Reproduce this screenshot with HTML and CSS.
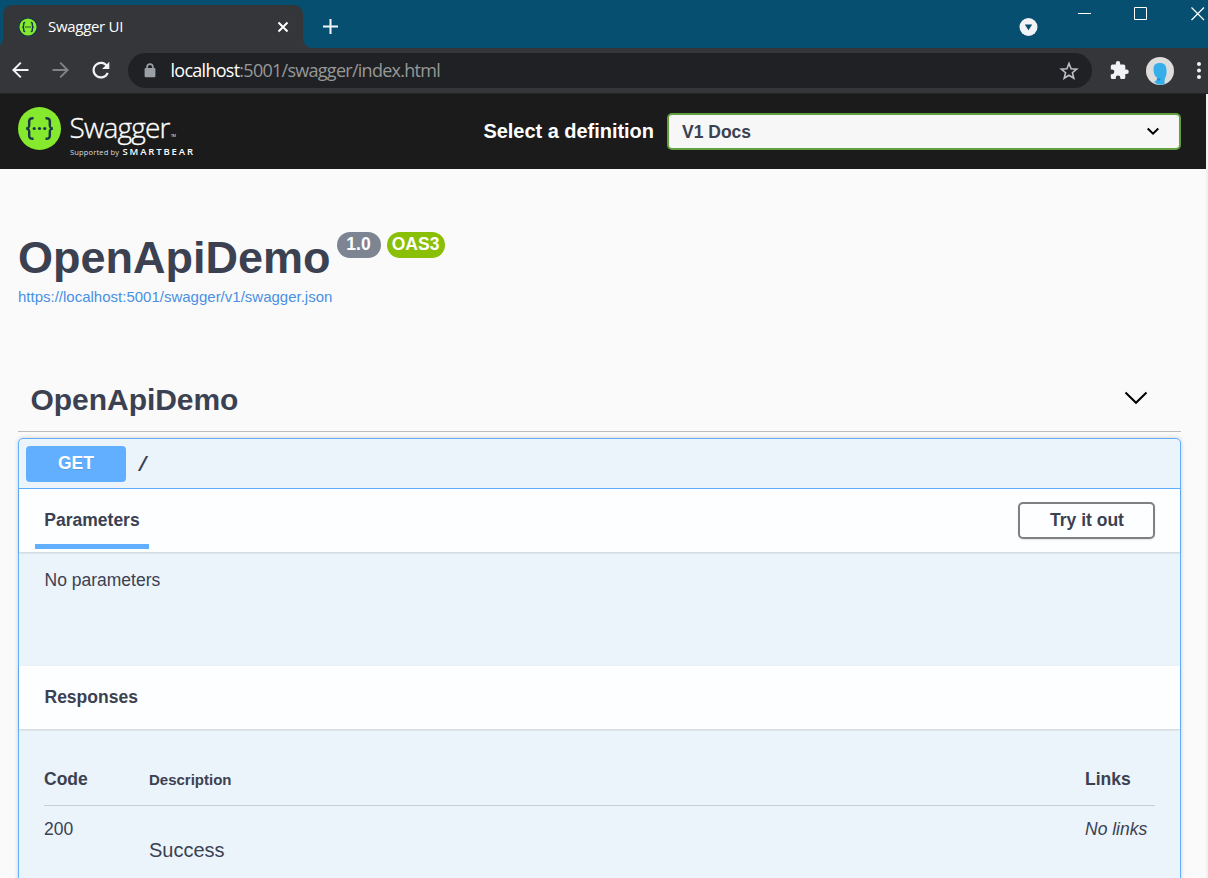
FILE: index.html
```html
<!DOCTYPE html>
<html lang="en">
<head>
<meta charset="utf-8">
<title>Swagger UI</title>
<link rel="stylesheet" href="styles.css">
</head>
<body>
<header class="tabstrip">
  <div class="tab">
    <svg class="favicon" width="20" height="20" viewBox="0 0 20 20"><circle cx="10" cy="10" r="9.2" fill="#85ea2d" stroke="#173647" stroke-width="1.2"/><path d="M7.2 5.5C5.6 5.4 5.6 6.2 5.7 8c0 1.2-.3 1.8-1.2 2 .9.2 1.2.8 1.2 2-.1 1.800 0 2.600 1.500 2.500M12.800 5.500c1.600-.1 1.600.700 1.500 2.500 0 1.200.3 1.800 1.200 2-.9.2-1.200.8-1.200 2 .1 1.800.1 2.600-1.500 2.500" fill="none" stroke="#173647" stroke-width="1.400"/><path d="M7.300 10h1.200m.9 0h1.200m.9 0h1.200" stroke="#173647" stroke-width="1.300"/></svg>
    <span class="tab-title">Swagger UI</span>
    <svg class="tab-close" width="12" height="12" viewBox="0 0 12 12"><path d="M1.500 1.500l9 9m0-9l-9 9" stroke="#fff" stroke-width="2"/></svg>
  </div>
  <svg class="newtab" width="16" height="16" viewBox="0 0 16 16"><path d="M7.500 0v15M0 7.500h15" stroke="#f4f7f8" stroke-width="2"/></svg>
  <div class="window-controls">
    <svg width="228" height="48" viewBox="0 0 228 48" fill="none"><circle cx="48.500" cy="27" r="9" fill="#f1f3f4"/><path d="M44.800 24.500h7.400L48.500 30.300z" fill="#074f70"/><path d="M98 13.500h13M154.500 7.500h12v12h-12z" stroke="#fff"/><path d="M211.500 7.500l12.500 12.500m0-12.500l-12.500 12.500" stroke="#fff" stroke-width="1.200"/></svg>
  </div>
</header>
<nav class="toolbar">
  <svg class="nav-icons" width="128" height="46" viewBox="0 0 128 46" fill="none"><path d="M28.500 22H13.500M20.800 14.600L13.400 22l7.400 7.400" stroke="#f1f3f4" stroke-width="2"/><path d="M52.500 22h15M60.200 14.600l7.400 7.400-7.400 7.400" stroke="#828386" stroke-width="2"/><path d="M107.300 18.600A7.300 7.300 0 1 0 107.700 24.800" stroke="#f1f3f4" stroke-width="2.200"/><path d="M109.300 13.800v7.200h-7.200z" fill="#f1f3f4"/></svg>
  <div class="omnibox">
    <svg width="12" height="15" viewBox="0 0 12 15"><path d="M3.100 6V4a2.900 2.900 0 0 1 5.800 0v2" fill="none" stroke="#9aa0a6" stroke-width="1.600"/><rect x=".6" y="5" width="10.800" height="9.200" rx="1.200" fill="#9aa0a6"/></svg>
    <span class="address"><b>localhost</b>:5001/swagger/index.html</span>
    <svg class="star" width="20" height="20" viewBox="0 0 20 20"><path d="M10 2.500l2.100 5.200 5.600.4-4.300 3.600 1.400 5.500-4.800-3-4.800 3 1.400-5.500L2.300 8.100l5.600-.4z" fill="none" stroke="#bdc1c6" stroke-width="1.600"/></svg>
  </div>
  <svg class="tools" width="116" height="46" viewBox="0 0 116 46"><path transform="translate(-.6 0)" d="M35.200 21.600h-1.300v-3.300a1.700 1.700 0 0 0-1.700-1.700h-3.400v-1.300a2.200 2.200 0 0 0-4.400 0v1.300h-3.300a1.700 1.700 0 0 0-1.700 1.700v3.200h1.200a2.350 2.350 0 0 1 0 4.700h-1.200v3.200a1.700 1.700 0 0 0 1.700 1.700h3.200v-1.200a2.350 2.350 0 0 1 4.700 0v1.200h3.200a1.700 1.700 0 0 0 1.700-1.700V26h1.300a2.200 2.200 0 0 0 0-4.400z" fill="#f1f3f4"/><circle cx="68" cy="23" r="14" fill="#dedddc"/><path d="M68 15c-4.500 0-6.500 2-6.500 6 0 4.500 1.200 7 3.500 8.800 0 2-1 3.200-3 4.200q3 2.600 6.500 2.800 2.500 0 4.200-.8c-.3-3-.1-5 .6-6.500 1.200-2 1.400-4.500 1.200-8-.3-4.500-2.500-6.500-6.500-6.500z" fill="#35aeea"/><path d="M65 31l4-1-2 3z" fill="#168dca"/><g fill="#f1f3f4"><circle cx="107" cy="16" r="2"/><circle cx="107" cy="22.500" r="2"/><circle cx="107" cy="29" r="2"/></g></svg>
</nav>
<div class="viewport">
<main class="page">
  <div class="topbar">
    <svg class="logo" width="190" height="75" viewBox="0 0 190 75"><circle cx="21.500" cy="34.500" r="21.500" fill="#85ea2d"/><g transform="translate(-.5 -.5)"><g fill="none" stroke="#173647" stroke-width="2.500"><path d="M16 24.800c-4.200-.4-4.600 1.500-4.300 5.500.2 3.200-.3 4.500-3 4.700 2.700.2 3.200 1.500 3 4.700-.3 4 .1 5.900 4.300 5.500M28 24.800c4.200-.4 4.600 1.500 4.300 5.500-.2 3.200.3 4.500 3 4.700-2.700.2-3.200 1.500-3 4.700.3 4-.1 5.900-4.300 5.500"/></g><g fill="#173647"><circle cx="16.700" cy="35" r="1.600"/><circle cx="22" cy="35" r="1.600"/><circle cx="27.300" cy="35" r="1.600"/></g></g><g fill="#fff"><text class="logo-name" x="51.500" y="43.500" textLength="101">Swagger</text><text class="logo-tm" x="153" y="43" textLength="5">TM</text><text class="logo-by" x="52" y="61" textLength="49">Supported by</text><text class="logo-brand" x="104.500" y="61" textLength="70.500">SMARTBEAR</text></g></svg>
    <span class="select-label">Select a definition</span>
    <div class="select"><span>V1 Docs</span><svg width="14" height="9" viewBox="0 0 14 9"><path d="M1.700 1.500L7 6.700l5.300-5.200" fill="none" stroke="#000" stroke-width="2"/></svg></div>
  </div>
  <section class="info">
    <h1>OpenApiDemo</h1>
    <div class="badges"><span class="badge version">1.0</span><span class="badge oas">OAS3</span></div>
    <a class="spec-link">https://localhost:5001/swagger/v1/swagger.json</a>
  </section>
  <h2 class="tag"><span>OpenApiDemo</span><svg width="24" height="14" viewBox="0 0 24 14"><path d="M1.500 1.500L12 11.800 22.500 1.500" fill="none" stroke="#000" stroke-width="2"/></svg></h2>
  <article class="operation">
    <div class="summary"><span class="method">GET</span><span class="path">/</span></div>
    <div class="section-head"><span class="param-tab">Parameters</span><button class="try">Try it out</button></div>
    <div class="no-params">No parameters</div>
    <div class="section-head responses-head"><span>Responses</span></div>
    <div class="responses">
      <div class="row row-head"><b>Code</b><b class="desc-head">Description</b><b>Links</b></div>
      <div class="row row-body"><span>200</span><span class="success">Success</span><i>No links</i></div>
    </div>
  </article>
</main>
<div class="scrollbar"></div>
</div>
</body>
</html>
```

FILE: styles.css
```css
* { box-sizing: border-box; }
html, body { height: 100%; }
body { margin: 0; overflow: hidden; display: flex; flex-direction: column; background: #fafafa; color: #3b4151; font-family: "Liberation Sans", Arial, sans-serif; font-size: 17.5px; }
svg { display: block; flex: none; }

.tabstrip { flex: none; height: 48px; background: #074f70; display: flex; padding: 5px 0 0 3px; }
.tab { position: relative; width: 300px; height: 43px; background: #35363a; border-radius: 9px 9px 0 0; display: flex; align-items: center; padding: 0 14px 0 15px; color: #fff; }
.tab::before, .tab::after { content: ""; position: absolute; bottom: 0; width: 9px; height: 9px; }
.tab::before { left: -9px; background: radial-gradient(circle at 0 0, transparent 8.5px, #35363a 9px); }
.tab::after { right: -9px; background: radial-gradient(circle at 100% 0, transparent 8.5px, #35363a 9px); }
.tab-title { margin: -2px 0 0 10px; font: 15px/20px "Open Sans", sans-serif; letter-spacing: -.3px; }
.tab-close { margin-left: auto; }
.newtab { margin: 14px 0 0 20px; }
.window-controls { margin: -5px 0 0 auto; }

.toolbar { flex: none; height: 46px; background: #35363a; border-bottom: 1px solid #252526; display: flex; }
.omnibox { width: 964px; height: 35px; margin-top: 5px; border-radius: 18px; background: #202124; display: flex; align-items: center; padding: 0 13px 0 16px; }
.address { margin: -2px 0 0 14.5px; font: 18px/24px "Open Sans", sans-serif; letter-spacing: -.73px; color: #969899; }
.address b { font-weight: 400; color: #fff; }
.star { margin-left: auto; }

.viewport { flex: 1; min-height: 0; display: flex; }
.page { width: 1206px; overflow: hidden; }
.scrollbar { width: 2px; background: #f1f1f1; }
.topbar { height: 75px; background: #1b1b1b; display: flex; align-items: center; padding: 0 25px 0 18px; }
.logo-name { font: 300 28px "Open Sans", sans-serif; stroke: #fff; stroke-width: .35px; }
.logo-tm { font: 3.500px "Open Sans", sans-serif; }
.logo-by { font: 7.500px "Open Sans", sans-serif; fill: #ddd; }
.logo-brand { font: 600 9.500px "Open Sans", sans-serif; }
.select-label { margin-left: auto; margin-right: 13px; color: #fff; font: bold 20px/23px "Liberation Sans", Arial, sans-serif; letter-spacing: -.03px; }
.select { width: 514px; height: 37px; background: #f7f7f7; border: 2px solid #62a03f; border-radius: 5px; display: flex; align-items: center; justify-content: space-between; padding: 0 19px 0 13px; font-weight: bold; }
.select span { margin-top: 1px; }

.info { display: grid; grid-template-columns: auto 1fr; padding: 61px 18px 0; }
h1 { margin: 0; padding-top: 1px; font-size: 45px; line-height: 54px; }
.badges { display: flex; gap: 6px; margin: 2px 0 0 6px; }
.badge { height: 26px; border-radius: 13px; color: #fff; font-weight: bold; line-height: 24px; text-align: center; }
.version { width: 44px; background: #7d8492; }
.oas { width: 58px; background: #89bf04; }
.spec-link { grid-column: 1 / -1; font-size: 15px; line-height: 18px; color: #4990e2; margin-top: 3px; }
.tag { margin: 62px 25px 6px 18px; height: 64px; padding: 0 33px 0 12.5px; display: flex; align-items: center; justify-content: space-between; border-bottom: 1px solid #bbbcc0; font-size: 30px; }
.tag span { letter-spacing: -.04px; }
.tag svg { margin-top: -3px; }

.operation { margin: 0 25px 0 18px; height: 460px; border: 1px solid #61affe; border-radius: 5px; background: #ebf3fb; box-shadow: 0 0 4px rgba(0,0,0,.19); }
.summary { height: 50px; border-bottom: 1px solid #61affe; display: flex; align-items: center; padding: 0 7px; }
.method { width: 100px; height: 36px; background: #61affe; border-radius: 4px; color: #fff; font-weight: bold; line-height: 34px; text-align: center; text-shadow: 0 1px 0 rgba(0,0,0,.1); }
.path { margin: 4px 0 0 11px; font: bold 20px/24px "Liberation Mono", monospace; }
.section-head { height: 63px; background: #fcfeff; box-shadow: 0 1px 2px rgba(0,0,0,.15); display: flex; align-items: center; justify-content: space-between; padding: 0 25px 0 16px; font-weight: bold; }
.param-tab { width: 114px; height: 60px; margin-top: -3px; padding-top: 4px; border-bottom: 5px solid #61affe; line-height: 54px; text-align: center; }
.try { width: 137px; height: 37px; padding: 0 0 0 1px; background: #fcfeff; border: 2px solid #808080; border-radius: 5px; box-shadow: 0 1px 2px rgba(0,0,0,.1); color: #3b4151; font: bold 17.5px "Liberation Sans", Arial, sans-serif; }
.no-params { height: 114px; padding: 18px 25.5px; line-height: 20px; }
.responses-head { padding-left: 25.5px; }
.responses { padding: 25px; }
.row { display: grid; grid-template-columns: 105px 1fr 70px; }
.row-head { height: 52px; border-bottom: 1px solid #c4cdd8; line-height: 50px; }
.desc-head { font-size: 15px; line-height: 51px; }
.row-body { padding-top: 13px; line-height: 20px; }
.success { font-size: 20px; line-height: 24px; margin-top: 19px; }
```
